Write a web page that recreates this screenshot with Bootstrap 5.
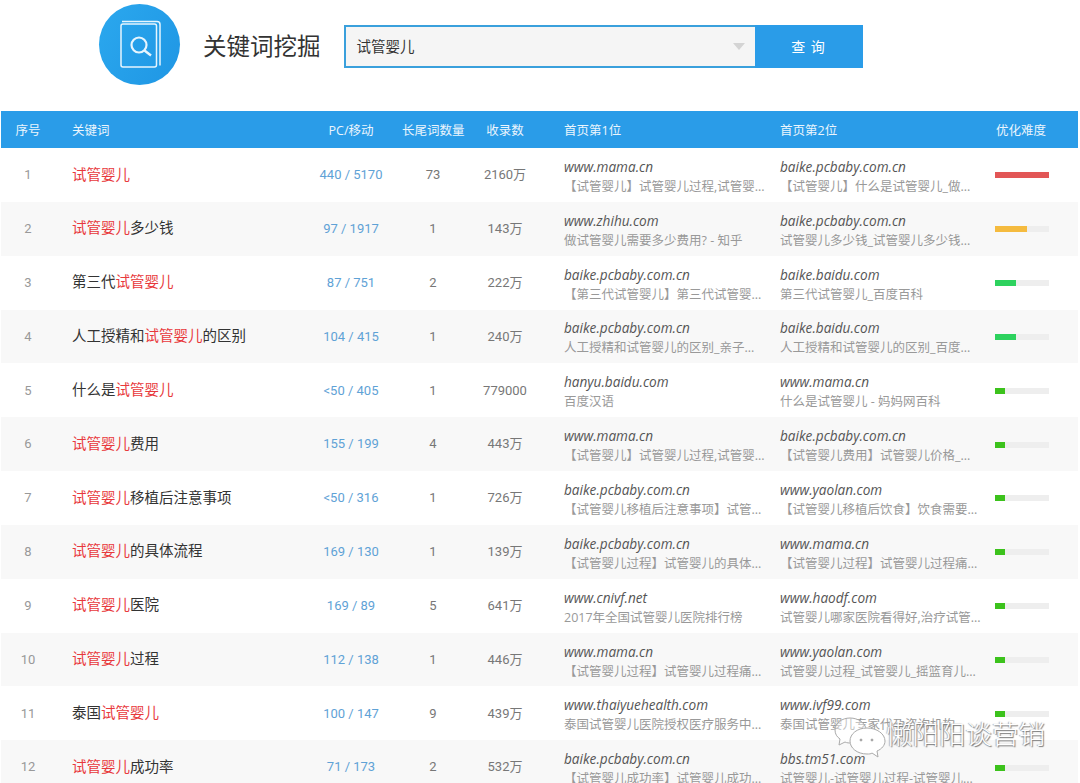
<!DOCTYPE html>
<html lang="zh"><head><meta charset="utf-8">
<link rel="stylesheet" href="https://cdn.jsdelivr.net/npm/bootstrap@5.3.0/dist/css/bootstrap.min.css">
<style>
html,body{height:783px;overflow:hidden;background:#fff}
body{font-family:"Open Sans","Noto Sans CJK SC",sans-serif;position:relative}
.top-head{height:111px;padding-left:99px;padding-top:4px}
.logo-disc{width:81px;height:81px;border-radius:50%;background:linear-gradient(120deg,#2ba8ee,#1f96e4);flex:none}
.page-title{font-size:23.5px;line-height:34px;color:#333;margin:0 23px;font-weight:400}
.search-box{width:411px;height:43px;margin-top:21px;border:2px solid #3aa0dc;border-right:0;background:#f5f5f5;padding-left:11px;font-size:14.5px;color:#333}
.caret-down{width:0;height:0;border-left:6px solid transparent;border-right:6px solid transparent;border-top:7px solid #d4d4d4;margin-right:10px}
.search-go{width:108px;height:43px;margin-top:21px;border-radius:0;background:#2a9ce8;border:0;color:#fff;font-size:14px;letter-spacing:1px}
.title-wrap{padding-top:25px}
.table-wrap{padding:0 2px 0 1px}
.kw-table{table-layout:fixed;width:1077px;margin:0;border-collapse:collapse}
.kw-table th{background:#2a9ce8;color:#eaf5fd;font-size:12.5px;font-weight:400;height:37px;padding:3px 0 0;border:0;vertical-align:middle;white-space:nowrap}
.kw-table td{height:53.85px;padding:0;border:0;vertical-align:middle;background:#fff;white-space:nowrap;overflow:visible}
.kw-table tbody tr:nth-child(even) td{background:#f8f8f8}
.kw-table .cell-left{padding-left:18px}
.idx-cell{font-family:Roboto,sans-serif;font-size:13px;color:#999}
.kw-table .word-cell{font-size:14.5px;color:#333;padding-left:17px;padding-bottom:1px}
.kw-table th.word-cell{font-size:12.5px;color:#eaf5fd;padding-bottom:0;padding-top:3px}
.hit{color:#e8393c}
.pair-cell{font-family:Roboto,"Noto Sans CJK SC",sans-serif;font-size:13px;color:#5fa2d6}
.num-cell{font-family:Roboto,"Noto Sans CJK SC",sans-serif;font-size:13px;color:#777}
.kw-table .site-cell{padding-top:3px}
.site{font-size:13.6px;font-style:italic;color:#555;line-height:19px}
.snip{font-size:12.5px;color:#999;line-height:19px;margin-top:1px}
.meter{width:54px;height:6px;background:#eee;margin:1px 0 0 17px}
.meter-fill{height:6px}
.f-red{background:#e25656}.f-yel{background:#f5bb3f}.f-grn{background:#2dd25e}.f-lim{background:#3cc21c}
.mark-over{position:absolute;left:834px;top:714px;display:flex;align-items:flex-start;pointer-events:none}
.mark-glyph{margin-top:2px}
.mark-text{font-size:26.5px;line-height:40px;color:#fff;margin-left:-2px;font-weight:300;text-shadow:1px 1px 1px #777,-1px 0 1px #aaa}
</style></head><body>
<div class="top-head d-flex">
<div class="logo-disc">
<svg width="81" height="81" viewBox="0 0 81 81" fill="none" stroke="#e6f5fe" stroke-width="1.5"><path d="M23 17.500h35a3 3 0 0 1 3 3v41"/><rect x="22" y="20" width="35.500" height="43" rx="2"/><circle cx="40" cy="41" r="7.500" stroke-width="2.200"/><path d="M45.500 46.500l6.500 5" stroke-width="2.400"/></svg>
</div>
<div class="title-wrap"><h1 class="page-title">关键词挖掘</h1></div>
<div class="search-box d-flex align-items-center justify-content-between"><span>试管婴儿</span><i class="caret-down"></i></div>
<button class="btn search-go" type="button">查 询</button>
</div>
<div class="table-wrap">
<table class="table kw-table">
<colgroup><col style="width:54px"><col style="width:245px"><col style="width:102px"><col style="width:62px"><col style="width:82px"><col style="width:216px"><col style="width:216px"><col style="width:100px"></colgroup>
<thead><tr><th class="text-center">序号</th><th class="word-cell">关键词</th><th class="text-center">PC/移动</th><th class="text-center">长尾词数量</th><th class="text-center">收录数</th><th class="cell-left">首页第1位</th><th class="cell-left">首页第2位</th><th class="cell-left">优化难度</th></tr></thead>
<tbody>
<tr><td class="text-center idx-cell">1</td><td class="word-cell"><span class="hit">试管婴儿</span></td><td class="text-center pair-cell">440 / 5170</td><td class="text-center num-cell">73</td><td class="text-center num-cell">2160万</td><td class="cell-left site-cell"><div class="site">www.mama.cn</div><div class="snip">【试管婴儿】试管婴儿过程,试管婴...</div></td><td class="cell-left site-cell"><div class="site">baike.pcbaby.com.cn</div><div class="snip">【试管婴儿】什么是试管婴儿_做...</div></td><td><div class="meter"><div class="meter-fill f-red" style="width:100%"></div></div></td></tr>
<tr><td class="text-center idx-cell">2</td><td class="word-cell"><span class="hit">试管婴儿</span>多少钱</td><td class="text-center pair-cell">97 / 1917</td><td class="text-center num-cell">1</td><td class="text-center num-cell">143万</td><td class="cell-left site-cell"><div class="site">www.zhihu.com</div><div class="snip">做试管婴儿需要多少费用? - 知乎</div></td><td class="cell-left site-cell"><div class="site">baike.pcbaby.com.cn</div><div class="snip">试管婴儿多少钱_试管婴儿多少钱...</div></td><td><div class="meter"><div class="meter-fill f-yel" style="width:60%"></div></div></td></tr>
<tr><td class="text-center idx-cell">3</td><td class="word-cell">第三代<span class="hit">试管婴儿</span></td><td class="text-center pair-cell">87 / 751</td><td class="text-center num-cell">2</td><td class="text-center num-cell">222万</td><td class="cell-left site-cell"><div class="site">baike.pcbaby.com.cn</div><div class="snip">【第三代试管婴儿】第三代试管婴...</div></td><td class="cell-left site-cell"><div class="site">baike.baidu.com</div><div class="snip">第三代试管婴儿_百度百科</div></td><td><div class="meter"><div class="meter-fill f-grn" style="width:38%"></div></div></td></tr>
<tr><td class="text-center idx-cell">4</td><td class="word-cell">人工授精和<span class="hit">试管婴儿</span>的区别</td><td class="text-center pair-cell">104 / 415</td><td class="text-center num-cell">1</td><td class="text-center num-cell">240万</td><td class="cell-left site-cell"><div class="site">baike.pcbaby.com.cn</div><div class="snip">人工授精和试管婴儿的区别_亲子...</div></td><td class="cell-left site-cell"><div class="site">baike.baidu.com</div><div class="snip">人工授精和试管婴儿的区别_百度...</div></td><td><div class="meter"><div class="meter-fill f-grn" style="width:38%"></div></div></td></tr>
<tr><td class="text-center idx-cell">5</td><td class="word-cell">什么是<span class="hit">试管婴儿</span></td><td class="text-center pair-cell">&lt;50 / 405</td><td class="text-center num-cell">1</td><td class="text-center num-cell">779000</td><td class="cell-left site-cell"><div class="site">hanyu.baidu.com</div><div class="snip">百度汉语</div></td><td class="cell-left site-cell"><div class="site">www.mama.cn</div><div class="snip">什么是试管婴儿 - 妈妈网百科</div></td><td><div class="meter"><div class="meter-fill f-lim" style="width:18%"></div></div></td></tr>
<tr><td class="text-center idx-cell">6</td><td class="word-cell"><span class="hit">试管婴儿</span>费用</td><td class="text-center pair-cell">155 / 199</td><td class="text-center num-cell">4</td><td class="text-center num-cell">443万</td><td class="cell-left site-cell"><div class="site">www.mama.cn</div><div class="snip">【试管婴儿】试管婴儿过程,试管婴...</div></td><td class="cell-left site-cell"><div class="site">baike.pcbaby.com.cn</div><div class="snip">【试管婴儿费用】试管婴儿价格_...</div></td><td><div class="meter"><div class="meter-fill f-lim" style="width:18%"></div></div></td></tr>
<tr><td class="text-center idx-cell">7</td><td class="word-cell"><span class="hit">试管婴儿</span>移植后注意事项</td><td class="text-center pair-cell">&lt;50 / 316</td><td class="text-center num-cell">1</td><td class="text-center num-cell">726万</td><td class="cell-left site-cell"><div class="site">baike.pcbaby.com.cn</div><div class="snip">【试管婴儿移植后注意事项】试管...</div></td><td class="cell-left site-cell"><div class="site">www.yaolan.com</div><div class="snip">【试管婴儿移植后饮食】饮食需要...</div></td><td><div class="meter"><div class="meter-fill f-lim" style="width:18%"></div></div></td></tr>
<tr><td class="text-center idx-cell">8</td><td class="word-cell"><span class="hit">试管婴儿</span>的具体流程</td><td class="text-center pair-cell">169 / 130</td><td class="text-center num-cell">1</td><td class="text-center num-cell">139万</td><td class="cell-left site-cell"><div class="site">baike.pcbaby.com.cn</div><div class="snip">【试管婴儿过程】试管婴儿的具体...</div></td><td class="cell-left site-cell"><div class="site">www.mama.cn</div><div class="snip">【试管婴儿过程】试管婴儿过程痛...</div></td><td><div class="meter"><div class="meter-fill f-lim" style="width:18%"></div></div></td></tr>
<tr><td class="text-center idx-cell">9</td><td class="word-cell"><span class="hit">试管婴儿</span>医院</td><td class="text-center pair-cell">169 / 89</td><td class="text-center num-cell">5</td><td class="text-center num-cell">641万</td><td class="cell-left site-cell"><div class="site">www.cnivf.net</div><div class="snip">2017年全国试管婴儿医院排行榜</div></td><td class="cell-left site-cell"><div class="site">www.haodf.com</div><div class="snip">试管婴儿哪家医院看得好,治疗试管...</div></td><td><div class="meter"><div class="meter-fill f-lim" style="width:18%"></div></div></td></tr>
<tr><td class="text-center idx-cell">10</td><td class="word-cell"><span class="hit">试管婴儿</span>过程</td><td class="text-center pair-cell">112 / 138</td><td class="text-center num-cell">1</td><td class="text-center num-cell">446万</td><td class="cell-left site-cell"><div class="site">www.mama.cn</div><div class="snip">【试管婴儿过程】试管婴儿过程痛...</div></td><td class="cell-left site-cell"><div class="site">www.yaolan.com</div><div class="snip">试管婴儿过程_试管婴儿_摇篮育儿...</div></td><td><div class="meter"><div class="meter-fill f-lim" style="width:18%"></div></div></td></tr>
<tr><td class="text-center idx-cell">11</td><td class="word-cell">泰国<span class="hit">试管婴儿</span></td><td class="text-center pair-cell">100 / 147</td><td class="text-center num-cell">9</td><td class="text-center num-cell">439万</td><td class="cell-left site-cell"><div class="site">www.thaiyuehealth.com</div><div class="snip">泰国试管婴儿医院授权医疗服务中...</div></td><td class="cell-left site-cell"><div class="site">www.ivf99.com</div><div class="snip">泰国试管婴儿专家代孕咨询机构</div></td><td><div class="meter"><div class="meter-fill f-lim" style="width:18%"></div></div></td></tr>
<tr><td class="text-center idx-cell">12</td><td class="word-cell"><span class="hit">试管婴儿</span>成功率</td><td class="text-center pair-cell">71 / 173</td><td class="text-center num-cell">2</td><td class="text-center num-cell">532万</td><td class="cell-left site-cell"><div class="site">baike.pcbaby.com.cn</div><div class="snip">【试管婴儿成功率】试管婴儿成功...</div></td><td class="cell-left site-cell"><div class="site">bbs.tm51.com</div><div class="snip">试管婴儿-试管婴儿过程-试管婴儿...</div></td><td><div class="meter"><div class="meter-fill f-lim" style="width:18%"></div></div></td></tr>
</tbody></table>
</div>
<div class="mark-over">
<svg class="mark-glyph" width="54" height="44" viewBox="0 0 54 44" fill="#fff" stroke="#aaa" stroke-width="1"><path d="M16 2C8 2 1 7 1 14c0 4 2 7 5 9l-1 6 6-3c2 1 4 1 6 1 8 0 15-6 15-13S24 2 16 2z" fill-opacity=".4"/><path d="M33 12c-10 0-17 6-17 13s7 13 17 13c2 0 4 0 5-1l6 4-1-6c5-2 8-6 8-10 0-7-8-13-18-13z"/><circle cx="27" cy="24" r="1" fill="#888"/><circle cx="38" cy="24" r="1" fill="#888"/></svg>
<span class="mark-text">懒阳阳谈营销</span>
</div>
</body></html>
